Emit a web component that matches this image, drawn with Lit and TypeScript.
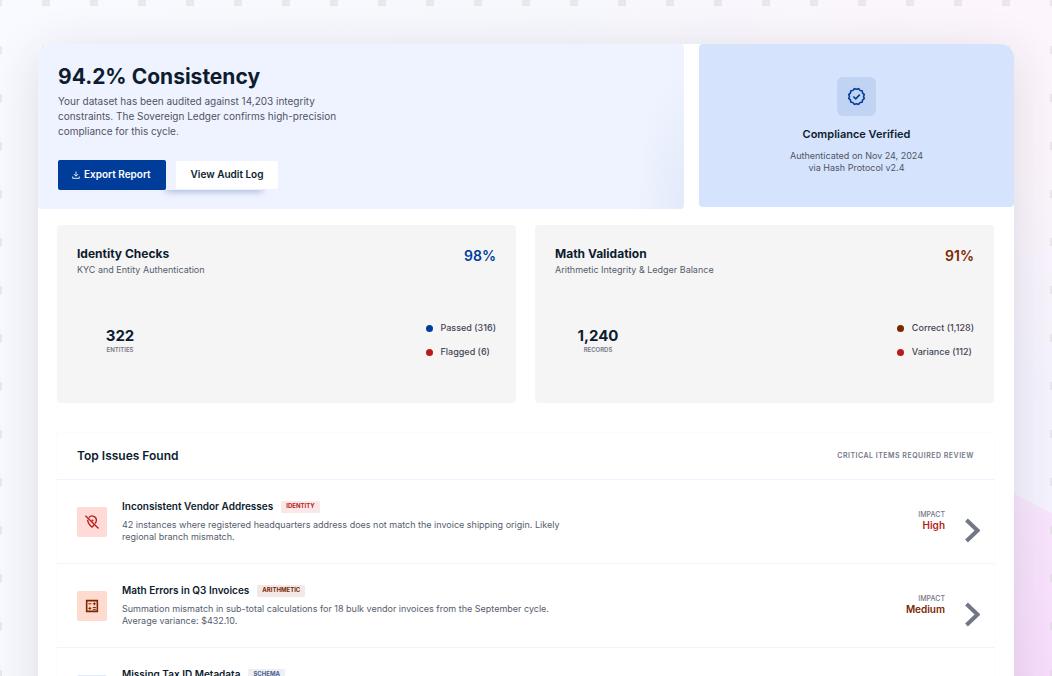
import { LitElement, html, css, svg, nothing } from "lit";
import { customElement, property } from "lit/decorators.js";

type Tone = "blue" | "brown" | "red" | "slate";

interface Legend {
  label: string;
  tone: Tone;
}

interface Check {
  title: string;
  subtitle: string;
  score: string;
  tone: Tone;
  total: string;
  unit: string;
  legend: Legend[];
}

interface Issue {
  title: string;
  tag: string;
  tone: Tone;
  icon: "location" | "calc" | "schema";
  lines: string[];
  impact: string;
}

const CHECKS: Check[] = [
  {
    title: "Identity Checks",
    subtitle: "KYC and Entity Authentication",
    score: "98%",
    tone: "blue",
    total: "322",
    unit: "ENTITIES",
    legend: [
      { label: "Passed (316)", tone: "blue" },
      { label: "Flagged (6)", tone: "red" },
    ],
  },
  {
    title: "Math Validation",
    subtitle: "Arithmetic Integrity & Ledger Balance",
    score: "91%",
    tone: "brown",
    total: "1,240",
    unit: "RECORDS",
    legend: [
      { label: "Correct (1,128)", tone: "brown" },
      { label: "Variance (112)", tone: "red" },
    ],
  },
];

const ISSUES: Issue[] = [
  {
    title: "Inconsistent Vendor Addresses",
    tag: "IDENTITY",
    tone: "red",
    icon: "location",
    lines: [
      "42 instances where registered headquarters address does not match the invoice shipping origin. Likely",
      "regional branch mismatch.",
    ],
    impact: "High",
  },
  {
    title: "Math Errors in Q3 Invoices",
    tag: "ARITHMETIC",
    tone: "brown",
    icon: "calc",
    lines: [
      "Summation mismatch in sub-total calculations for 18 bulk vendor invoices from the September cycle.",
      "Average variance: $432.10.",
    ],
    impact: "Medium",
  },
  {
    title: "Missing Tax ID Metadata",
    tag: "SCHEMA",
    tone: "slate",
    icon: "schema",
    lines: [],
    impact: "",
  },
];

const ICONS = {
  location: svg`<path d="M7.5 5.2A6.300 6.300 0 0 1 18.600 9.500c0 1.600-.8 3.300-2 5M5.500 8.500c-.2 3.800 2.500 7.500 6.500 11.200 1.200-1.100 2.200-2.200 3-3.300M2.200 2.600l19.600 19" fill="none" stroke="currentColor" stroke-width="2"/><circle cx="12.800" cy="9.600" r="1.500" fill="currentColor"/>`,
  calc: svg`<path d="M4 4h16v16H4z" fill="none" stroke="currentColor" stroke-width="2.400"/><path d="M6.500 8.700h4.600M13.200 8.700h4.600M15.500 6.400v4.600M6.500 15.500h4.600M8.800 13.200v4.600M13.200 14.200h4.600M13.200 17h4.600" fill="none" stroke="currentColor" stroke-width="1.500"/>`,
  schema: svg`<path d="M4 4h16v16H4z" fill="none" stroke="currentColor" stroke-width="2"/>`,
};

@customElement("check-card")
export class CheckCard extends LitElement {
  @property({ attribute: false }) check!: Check;

  static styles = css`
    :host {
      display: block;
      padding: 20px 20px 33px;
      border-radius: 4px;
      background: #f5f5f5;
    }
    .head {
      display: flex;
      justify-content: space-between;
      align-items: flex-start;
    }
    .title {
      margin: 0;
      font-size: 12px;
      line-height: 18px;
      font-weight: 700;
      color: #0d1c2e;
    }
    .subtitle {
      margin: 0;
      font-size: 9px;
      line-height: 13px;
      color: #565c6c;
    }
    .score {
      font-size: 14px;
      line-height: 21px;
      font-weight: 600;
    }
    .body {
      display: flex;
      justify-content: space-between;
      align-items: center;
      min-height: 60px;
      margin-top: 34px;
    }
    .total {
      width: 86px;
      text-align: center;
    }
    .number {
      display: block;
      font-size: 15px;
      line-height: 20px;
      font-weight: 700;
      color: #0d1c2e;
    }
    .unit {
      display: block;
      font-size: 6px;
      line-height: 8px;
      font-weight: 600;
      color: #737785;
    }
    .legend {
      display: grid;
      gap: 12px;
      margin: 0;
      padding: 0;
      list-style: none;
      font-size: 9px;
      line-height: 12px;
      font-weight: 500;
      color: #434654;
    }
    .entry {
      display: flex;
      align-items: center;
      gap: 8px;
    }
    .dot {
      width: 7px;
      height: 7px;
      border-radius: 50%;
      background: currentColor;
    }
    .blue {
      color: #003d9b;
    }
    .brown {
      color: #7b2600;
    }
    .red {
      color: #ba1a1a;
    }
  `;

  render() {
    const c = this.check;
    return html`
      <div class="head">
        <div>
          <h2 class="title">${c.title}</h2>
          <p class="subtitle">${c.subtitle}</p>
        </div>
        <span class="score ${c.tone}">${c.score}</span>
      </div>
      <div class="body">
        <div class="total">
          <span class="number">${c.total}</span>
          <span class="unit">${c.unit}</span>
        </div>
        <ul class="legend">
          ${c.legend.map(
            (l) => html`<li class="entry"><span class="dot ${l.tone}"></span>${l.label}</li>`
          )}
        </ul>
      </div>
    `;
  }
}

@customElement("issue-row")
export class IssueRow extends LitElement {
  @property({ attribute: false }) issue!: Issue;

  static styles = css`
    :host {
      display: flex;
      align-items: center;
      padding: 20px 14px 20px 20px;
      border-top: 1px solid #eff3ff;
    }
    .tile {
      display: grid;
      place-items: center;
      flex: none;
      width: 30px;
      height: 30px;
      border-radius: 2px;
    }
    .tile svg {
      width: 16px;
      height: 16px;
    }
    .text {
      flex: 1;
      min-height: 43px;
      margin-left: 15px;
    }
    .heading {
      display: flex;
      align-items: center;
      gap: 8px;
      height: 12px;
      margin-bottom: 7px;
    }
    .title {
      margin: 0;
      font-size: 10px;
      line-height: 14px;
      font-weight: 600;
      color: #0d1c2e;
    }
    .tag {
      margin-top: 2px;
      padding: 0 5px 2px;
      border-radius: 1px;
      font-size: 6px;
      line-height: 10px;
      font-weight: 700;
    }
    .detail {
      margin: 0;
      font-size: 9px;
      line-height: 12px;
      color: #565c6c;
    }
    .line {
      display: block;
    }
    .impact {
      margin: 0 20px 0 24px;
      padding-bottom: 4px;
      text-align: right;
    }
    .label {
      display: block;
      font-size: 7px;
      line-height: 11px;
      font-weight: 500;
      color: #737785;
    }
    .level {
      display: block;
      font-size: 10px;
      line-height: 11px;
      font-weight: 600;
    }
    .open {
      align-self: flex-end;
      width: 15px;
      height: 25px;
      padding: 0;
      border: 0;
      background: none;
      color: #737785;
    }
    .open svg {
      display: block;
      width: 15px;
      height: 25px;
    }
    .red {
      color: #ba1a1a;
    }
    .brown {
      color: #7b2600;
    }
    .tile.red {
      background: #ffdad6;
    }
    .tile.brown {
      background: #ffdbcf;
    }
    .tile.slate {
      background: #dfe8fd;
      color: #4c5d8d;
    }
    .tag.red {
      background: #fae8e8;
    }
    .tag.brown {
      background: #f2e9e6;
    }
    .tag.slate {
      background: #edeff4;
      color: #4c5d8d;
    }
  `;

  render() {
    const i = this.issue;
    return html`
      <span class="tile ${i.tone}"><svg viewBox="0 0 24 24" aria-hidden="true">${ICONS[i.icon]}</svg></span>
      <div class="text">
        <div class="heading">
          <h3 class="title">${i.title}</h3>
          <span class="tag ${i.tone}">${i.tag}</span>
        </div>
        <p class="detail">${i.lines.map((l) => html`<span class="line">${l}</span>`)}</p>
      </div>
      ${i.impact
        ? html`
            <div class="impact">
              <span class="label">IMPACT</span>
              <span class="level ${i.tone}">${i.impact}</span>
            </div>
            <button class="open" type="button" aria-label="Open issue">
              <svg viewBox="0 0 15 25" aria-hidden="true">
                <path d="M1.500 2L12.500 12.500L1.500 23" fill="none" stroke="currentColor" stroke-width="4" />
              </svg>
            </button>
          `
        : nothing}
    `;
  }
}

@customElement("app-root")
export class AppRoot extends LitElement {
  static styles = css`
    :host {
      display: block;
      position: relative;
      z-index: 0;
      box-sizing: border-box;
      height: 100vh;
      overflow: hidden;
      padding: 44px 38px 0;
      font-family: Inter, "Liberation Sans", sans-serif;
    }
    .backdrop {
      position: absolute;
      inset: 0;
      z-index: -1;
      width: 100%;
      height: 100%;
    }
    .card {
      min-height: 100vh;
      border-radius: 14px 14px 0 0;
      background: #ffffff;
      box-shadow: 0 10px 50px rgba(40, 40, 50, 0.14);
    }
    .top {
      display: grid;
      grid-template-columns: 646fr 315fr;
      gap: 15px;
      align-items: start;
    }
    .hero {
      padding: 21px 20px 19px;
      border-radius: 14px 4px 4px 4px;
      background:
        radial-gradient(ellipse 48px 130px at 100% 95%, rgba(0, 61, 155, 0.05), transparent),
        #eff3ff;
    }
    .headline {
      margin: 0;
      font-size: 21px;
      line-height: 24px;
      font-weight: 700;
      color: #0d1c2e;
    }
    .lead {
      margin: 5px 0 21px;
      font-size: 10px;
      line-height: 15px;
      color: #505462;
    }
    .line {
      display: block;
    }
    .actions {
      display: flex;
      gap: 10px;
      position: relative;
    }
    .actions::before {
      content: "";
      position: absolute;
      left: 108px;
      top: 20px;
      width: 96px;
      height: 10px;
      box-shadow: 0 2px 6px rgba(0, 61, 155, 0.3);
      clip-path: inset(9px -10px -12px -10px);
    }
    .button {
      display: flex;
      align-items: center;
      gap: 4px;
      position: relative;
      height: 30px;
      padding: 0 15px 3px 14px;
      border: 0;
      border-radius: 2px;
      font: 600 10px/14px Inter, "Liberation Sans", sans-serif;
    }
    .button svg {
      width: 8px;
      height: 8px;
      margin-top: 2px;
    }
    .primary {
      background: #003d9b;
      color: #ffffff;
    }
    .secondary {
      height: 28px;
      margin-top: 1px;
      padding: 0 15px 3px;
      background: #ffffff;
      color: #0d1c2e;
    }
    .verified {
      display: flex;
      flex-direction: column;
      align-items: center;
      padding: 33px 20px;
      border-radius: 4px 14px 4px 4px;
      background: #d5e3fd;
      text-align: center;
    }
    .badge {
      display: grid;
      place-items: center;
      width: 39px;
      height: 39px;
      border-radius: 6px;
      background: #c0d3f3;
      color: #003d9b;
    }
    .badge svg {
      width: 19px;
      height: 19px;
    }
    .verified-title {
      margin: 10px 0 8px;
      font-size: 11px;
      line-height: 16px;
      font-weight: 600;
      color: #0d1c2e;
    }
    .verified-note {
      margin: 0;
      font-size: 9px;
      line-height: 12px;
      color: #505462;
    }
    .checks {
      display: grid;
      grid-template-columns: 1fr 1fr;
      gap: 19px;
      padding: 16px 20px 0 19px;
    }
    .issues {
      margin: 30px 20px 0 19px;
      box-shadow: 0 0 2px rgba(0, 0, 0, 0.04);
    }
    .issues-head {
      display: flex;
      align-items: center;
      justify-content: space-between;
      height: 46px;
      padding: 0 20px;
    }
    .issues-title {
      margin: 0;
      font-size: 12px;
      line-height: 16px;
      font-weight: 600;
      color: #0d1c2e;
    }
    .issues-note {
      font-size: 7px;
      line-height: 10px;
      font-weight: 600;
      letter-spacing: 0.5px;
      color: #737785;
    }
  `;

  render() {
    return html`
      <svg class="backdrop" aria-hidden="true">
        <defs>
          <pattern id="grid" x="42" y="-2" width="48" height="48" patternUnits="userSpaceOnUse">
            <rect width="8" height="8" fill="#d8d8d4" fill-opacity="0.500" />
          </pattern>
          <linearGradient id="sky" x1="0" x2="1" y1="0" y2="0">
            <stop offset="0" stop-color="#f8faff" />
            <stop offset="0.500" stop-color="#f6f8fd" />
            <stop offset="1" stop-color="#fdf5fc" />
          </linearGradient>
          <linearGradient id="cool" x1="0" x2="0" y1="0" y2="1">
            <stop offset="0.200" stop-color="#f4f3fe" stop-opacity="0" />
            <stop offset="0.600" stop-color="#f4f3fe" />
          </linearGradient>
          <linearGradient id="blush" x1="0" x2="0" y1="0" y2="1">
            <stop offset="0" stop-color="#f8e7fd" />
            <stop offset="1" stop-color="#f8dcfd" />
          </linearGradient>
        </defs>
        <rect width="100%" height="100%" fill="url(#sky)" />
        <rect x="50%" width="50%" height="100%" fill="url(#cool)" />
        <path d="M1000 486L1060 518V700H1000Z" fill="url(#blush)" />
        <rect width="100%" height="100%" fill="url(#grid)" />
      </svg>
      <main class="card">
        <section class="top">
          <div class="hero">
            <h1 class="headline">94.2% Consistency</h1>
            <p class="lead">
              <span class="line">Your dataset has been audited against 14,203 integrity</span>
              <span class="line">constraints. The Sovereign Ledger confirms high-precision</span>
              <span class="line">compliance for this cycle.</span>
            </p>
            <div class="actions">
              <button class="button primary" type="button">
                <svg viewBox="0 0 8 8" aria-hidden="true">
                  <path d="M4 0.500V5M2 3.200L4 5.200L6 3.200M0.700 5.500V7.300H7.300V5.500" fill="none" stroke="currentColor" stroke-width="0.900" />
                </svg>
                Export Report
              </button>
              <button class="button secondary" type="button">View Audit Log</button>
            </div>
          </div>
          <div class="verified">
            <span class="badge">
              <svg viewBox="0 0 24 24" aria-hidden="true">
                <path
                  d="M12 2.900L14.700 2.100L16.500 4.300L19.200 4.900L19.700 7.700L21.800 9.600L20.900 12L21.800 14.400L19.700 16.300L19.200 19.100L16.500 19.700L14.700 21.900L12 21.100L9.300 21.900L7.500 19.700L4.800 19.100L4.300 16.300L2.200 14.400L3.100 12L2.200 9.600L4.300 7.700L4.800 4.900L7.500 4.300L9.300 2.100Z"
                  fill="none" stroke="currentColor" stroke-width="2" />
                <path d="M8 12L11 15L16.200 9.600" fill="none" stroke="currentColor" stroke-width="2" />
              </svg>
            </span>
            <h2 class="verified-title">Compliance Verified</h2>
            <p class="verified-note">
              <span class="line">Authenticated on Nov 24, 2024</span>
              <span class="line">via Hash Protocol v2.4</span>
            </p>
          </div>
        </section>
        <section class="checks">
          ${CHECKS.map((c) => html`<check-card .check=${c}></check-card>`)}
        </section>
        <section class="issues">
          <header class="issues-head">
            <h2 class="issues-title">Top Issues Found</h2>
            <span class="issues-note">CRITICAL ITEMS REQUIRED REVIEW</span>
          </header>
          ${ISSUES.map((i) => html`<issue-row .issue=${i}></issue-row>`)}
        </section>
      </main>
    `;
  }
}
